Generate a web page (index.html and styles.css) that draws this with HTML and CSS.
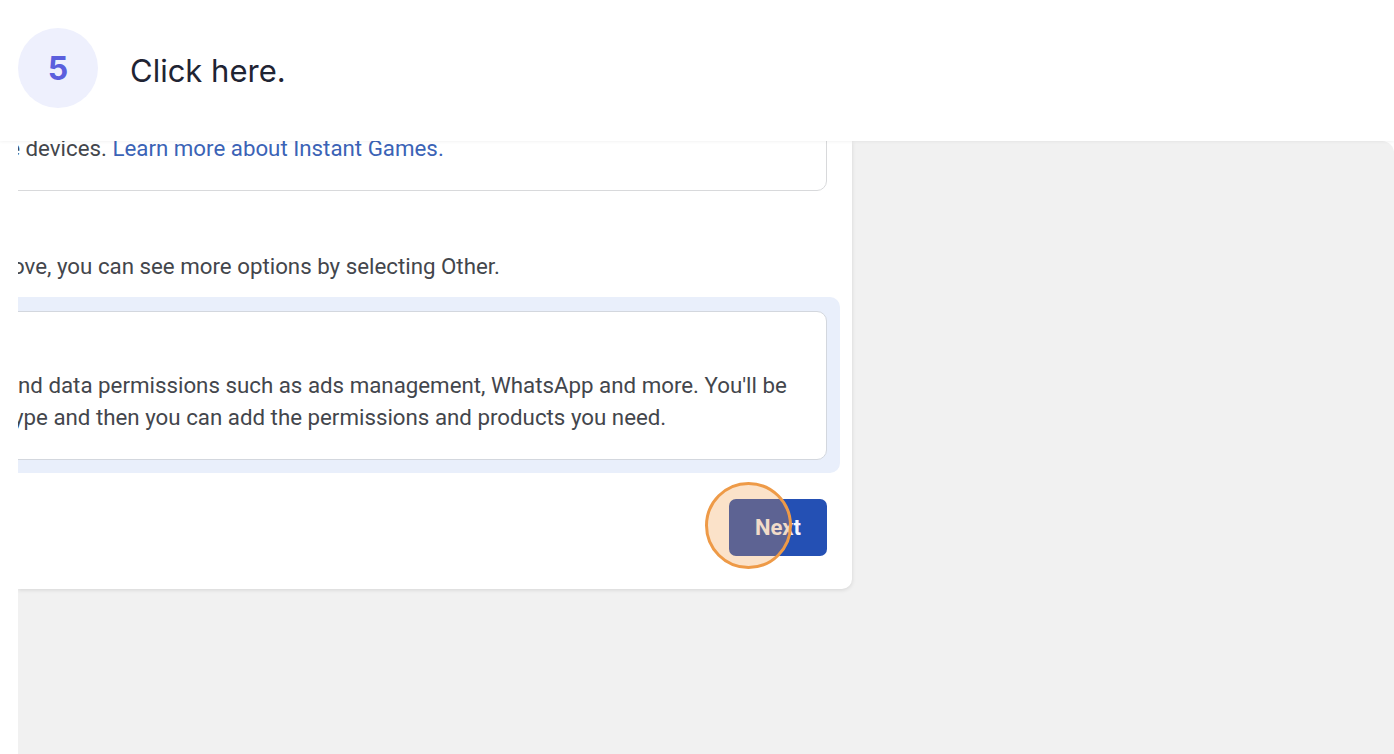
FILE: index.html
```html
<!DOCTYPE html>
<html lang="en">
<head>
<meta charset="utf-8">
<title>Step 5</title>
<link rel="stylesheet" href="styles.css">
</head>
<body>
<header class="step-header">
  <div class="step-num">5</div>
  <div class="step-text">Click here.</div>
</header>
<main class="stage">
  <section class="card">
    <div class="info-box">
      <p class="line"><span class="pre">on mobile</span> devices. <a class="link" href="#">Learn more about Instant Games.</a></p>
    </div>
    <p class="line hint"><span class="pre">needs ab</span>ove, you can see more options by selecting Other.</p>
    <div class="option">
      <div class="option-inner">
        <p class="line"><span class="pre">Meta APIs a</span>nd data permissions such as ads management, WhatsApp and more. You'll be</p>
        <p class="line second"><span class="pre">an app t</span>ype and then you can add the permissions and products you need.</p>
      </div>
    </div>
    <div class="actions">
      <div class="btn-wrap">
        <button class="btn-next" type="button">Next</button>
        <span class="ring"></span>
      </div>
    </div>
  </section>
</main>
</body>
</html>
```
FILE: styles.css
```css
* { box-sizing: border-box; }

html, body {
  margin: 0;
  height: 100%;
  overflow: hidden;
  background: #ffffff;
}

body {
  font-family: Roboto, "Liberation Sans", sans-serif;
}

.step-header {
  position: relative;
  z-index: 2;
  height: 141px;
  display: flex;
  align-items: flex-start;
  gap: 32px;
  padding: 28px 0 0 18px;
  background: #ffffff;
  box-shadow: 0 1px 3px rgba(0, 0, 0, 0.05);
}

.step-num {
  width: 80px;
  height: 80px;
  border-radius: 50%;
  background: #eef0fd;
  display: flex;
  align-items: center;
  justify-content: center;
  font-family: Inter, "Liberation Sans", sans-serif;
  font-weight: 700;
  font-size: 32px;
  color: #5b5fdd;
}

.step-text {
  height: 80px;
  display: flex;
  align-items: center;
  font-family: Inter, "Liberation Sans", sans-serif;
  font-size: 31px;
  color: #1f2433;
  padding-top: 4px;
}

.stage {
  margin-left: 18px;
  height: calc(100vh - 141px);
  background: #f1f1f1;
  border-top-right-radius: 12px;
  overflow: hidden;
}

.card {
  width: 834px;
  height: 448px;
  background: #ffffff;
  border-bottom-right-radius: 10px;
  box-shadow: 0 1px 4px rgba(0, 0, 0, 0.12);
  padding: 0 12px 0 0;
  overflow: hidden;
  display: flex;
  flex-direction: column;
}

.line {
  margin: 0;
  font-size: 22.3px;
  line-height: 32px;
  color: #43464c;
  white-space: nowrap;
}

.pre {
  display: inline-block;
  width: 0;
  direction: rtl;
  white-space: nowrap;
}

.link {
  color: #3b63b6;
  text-decoration: none;
}

.info-box {
  margin: -60px 13px 0 -80px;
  border: 1px solid #d8d9db;
  border-radius: 10px;
  padding: 50px 16px 26px 81px;
}

.hint {
  margin-top: 59px;
  margin-left: -6px;
}

.option {
  margin: 15px 0 0 -60px;
  padding: 14px 13px 13px 14px;
  background: #e9effb;
  border-radius: 10px;
}

.option-inner {
  background: #ffffff;
  border: 1px solid #d3d7de;
  border-radius: 10px;
  padding: 57px 16px 26px 45px;
}

.option-inner .second {
  margin-left: -5px;
}

.actions {
  margin-top: 26px;
  padding-right: 13px;
  display: flex;
  justify-content: flex-end;
}

.btn-wrap {
  position: relative;
}

.btn-next {
  width: 98px;
  height: 57px;
  border: none;
  border-radius: 7px;
  background: #2450b4;
  color: #f2f5ff;
  font-family: Roboto, "Liberation Sans", sans-serif;
  font-weight: 700;
  font-size: 22px;
  padding: 0;
}

.ring {
  position: absolute;
  left: -24px;
  top: -17px;
  width: 87px;
  height: 87px;
  border-radius: 50%;
  border: 3px solid #ee9a47;
  background: rgba(240, 150, 60, 0.28);
}
```
